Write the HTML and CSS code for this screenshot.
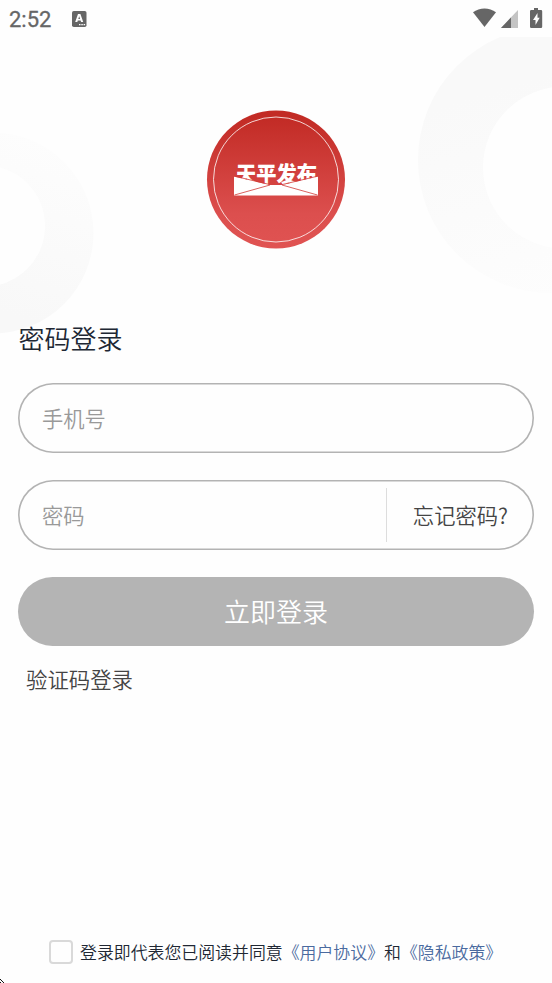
FILE: index.html
```html
<!DOCTYPE html>
<html lang="zh-CN">
<head>
<meta charset="utf-8">
<title>密码登录</title>
<link rel="stylesheet" href="styles.css">
</head>
<body>
<svg class="backdrop" viewBox="0 0 552 983" aria-hidden="true">
  <defs>
    <linearGradient id="ringRight" x1="0.35" y1="0" x2="0.65" y2="1"><stop offset="0.2" stop-color="#f9f9f9"/><stop offset="1" stop-color="#fdfdfd"/></linearGradient>
    <linearGradient id="ringLeft" x1="0.65" y1="0" x2="0.35" y2="1"><stop offset="0" stop-color="#fdfdfd"/><stop offset="0.85" stop-color="#f8f8f8"/></linearGradient>
    <clipPath id="belowBar"><rect y="37" width="552" height="946"/></clipPath>
  </defs>
  <g clip-path="url(#belowBar)">
    <circle cx="551" cy="160" r="133" fill="url(#ringRight)"/>
    <circle cx="564" cy="167.500" r="81" fill="#fefefe"/>
    <circle cx="-7" cy="233" r="100.500" fill="url(#ringLeft)"/>
    <circle cx="-15.500" cy="226" r="60.500" fill="#fefefe"/>
  </g>
  <path d="M0 979h1v1h1v1h-1v-1h-1zM2 981h1v1h1v1h-1v-1h-1zM0 982h1v1h-1z" fill="#111"/>
</svg>
<div class="screen">
  <header class="status">
    <span class="clock">2:52</span>
    <svg class="notice" width="15" height="16" viewBox="0 0 15 16"><rect width="14.500" height="16" rx="1.800" fill="#666"/><path fill="#fefefe" fill-rule="evenodd" d="M6 3h2.400l2.800 8H9.100l-.5-1.500H5.800L5.300 11H3.200zM7.200 5.300 6.300 8h1.800zM7 13h1.500v1.300H7zm2.300 0h1.500v1.300H9.300zm2.300 0h1.500v1.300h-1.500z"/></svg>
    <svg class="signals" width="72" height="22" viewBox="0 0 72 22">
      <path fill="#666" d="M1 4.300C7.500-.8 17.500-.8 24 4.300L12.500 19z"/>
      <path fill="#c4c4c4" d="M46 2v18H29z"/><path fill="#666" d="M39 9.400V20H29z"/>
      <path fill="#666" d="M62 0h4v2h3q1.200 0 1.200 1.200v15.600Q70.200 20 69 20H59.200Q58 20 58 18.800V3.200Q58 2 59.200 2H62z"/>
      <path fill="#fefefe" d="M65.500 5 61 12h2.500v5l4.200-7.200h-2.200z"/>
    </svg>
  </header>
  <main class="login">
    <svg class="logo" width="140" height="140" viewBox="206 109.500 140 140" role="img">
      <defs><linearGradient id="seal" x1="0" y1="0" x2="0" y2="1"><stop offset="0.05" stop-color="#c22b25"/><stop offset="0.75" stop-color="#dc4f4e"/><stop offset="1" stop-color="#e05352"/></linearGradient></defs>
      <circle cx="276" cy="179" r="69" fill="url(#seal)"/>
      <circle cx="276" cy="179" r="62.500" fill="none" stroke="#fff" stroke-width=".8"/>
      <text class="brand" x="236" y="181" textLength="81" lengthAdjust="spacingAndGlyphs">天平发布</text>
      <path fill="#fff" d="M234 176 270 184.500H282L318 176V195H234z"/>
      <path fill="none" stroke="#d03a36" stroke-width=".8" d="M234 175.600 270 184.100M318 175.600 282 184.100M234.500 194.500 270 184.500M317.500 194.500 282 184.500"/>
    </svg>
    <h1 class="title">密码登录</h1>
    <div class="field"><span class="hint">手机号</span></div>
    <div class="field"><span class="hint">密码</span><span class="forgot">忘记密码?</span></div>
    <button class="submit">立即登录</button>
    <a class="code-login">验证码登录</a>
  </main>
  <footer class="agreement">
    <span class="checkbox"></span>
    <span class="terms">登录即代表您已阅读并同意<a class="link">《用户协议》</a>和<a class="link">《隐私政策》</a></span>
  </footer>
</div>
</body>
</html>
```
FILE: styles.css
```css
* { box-sizing: border-box; }
body {
  margin: 0;
  background: #fefefe;
  color: #202733;
  font-family: "Noto Sans CJK SC", sans-serif;
  font-weight: 350;
}
.backdrop { position: absolute; inset: 0; width: 552px; height: 983px; }
.screen {
  position: relative;
  display: flex;
  flex-direction: column;
  width: 552px;
  height: 983px;
  overflow: hidden;
}
.status { display: flex; align-items: flex-start; height: 37px; padding: 8px 8px 0 9px; }
.clock {
  width: 63px;
  margin-top: -1px;
  font: 400 22px/25px Roboto, sans-serif;
  color: #666;
  -webkit-text-stroke: 0.3px #666;
}
.notice { margin-top: 3px; }
.signals { margin-left: auto; }
.login { display: flex; flex-direction: column; padding: 73px 18px 0; }
.logo { align-self: center; }
.brand {
  font-family: "Noto Sans CJK SC", sans-serif;
  font-size: 22px;
  font-weight: 900;
  fill: #fff;
}
.title { margin: 68px 0 26px 0.5px; font-size: 26px; font-weight: 350; line-height: 39px; }
.field {
  display: flex;
  align-items: center;
  justify-content: space-between;
  height: 70px;
  margin-bottom: 27px;
  padding: 0 26px 0 24px;
  border-radius: 35px;
  box-shadow: inset 0 0 0 1.6px #b3b3b3;
  font-size: 21.3px;
}
.hint { padding-bottom: 2px; color: #999; }
.forgot {
  display: flex;
  align-items: center;
  height: 54px;
  padding: 0 0 2px 26px;
  border-left: 1px solid #ddd;
  color: #444;
}
.submit {
  height: 69px;
  padding: 0 0 2px;
  border: 0;
  border-radius: 35px;
  background: #b4b4b4;
  color: #fff;
  font: 350 26px/39px "Noto Sans CJK SC", sans-serif;
}
.code-login { margin: 17px 0 0 8px; font-size: 21.4px; line-height: 32px; color: #444; }
.agreement { display: flex; align-items: center; margin-top: auto; padding: 0 0 18px 49px; }
.checkbox { width: 24px; height: 24px; margin-right: 7px; border: 2px solid #d9d9d9; border-radius: 4px; }
.terms { font-size: 16.9px; line-height: 26px; white-space: nowrap; }
.link { color: #4a6a9f; }
```
